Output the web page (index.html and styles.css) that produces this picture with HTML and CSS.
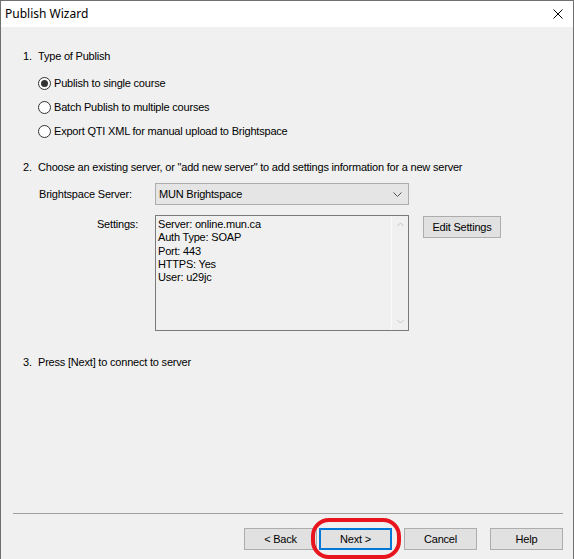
FILE: index.html
```html
<!DOCTYPE html>
<html lang="en">
<head>
<meta charset="utf-8">
<title>Publish Wizard</title>
<link rel="stylesheet" href="styles.css">
</head>
<body>
<div class="window">
  <header class="titlebar">
    <span class="title">Publish Wizard</span>
    <span class="close" aria-label="Close">
      <svg width="10" height="10" viewBox="0 0 10 10"><path d="M0.5 0.5 L9.5 9.5 M9.5 0.5 L0.5 9.5" stroke="#000" stroke-width="1" fill="none"/></svg>
    </span>
  </header>

  <main class="content">
    <section class="step step-one">
      <div class="step-head"><span class="num">1.</span><span>Type of Publish</span></div>
      <ul class="radios">
        <li class="radio-row"><span class="radio checked"></span><span>Publish to single course</span></li>
        <li class="radio-row"><span class="radio"></span><span>Batch Publish to multiple courses</span></li>
        <li class="radio-row"><span class="radio"></span><span>Export QTI XML for manual upload to Brightspace</span></li>
      </ul>
    </section>

    <section class="step step-two">
      <div class="step-head"><span class="num">2.</span><span>Choose an existing server, or "add new server" to add settings information for a new server</span></div>
      <div class="form-grid">
        <label class="lbl lbl-left">Brightspace Server:</label>
        <div class="select">
          <span>MUN Brightspace</span>
          <svg class="chev" width="9" height="6" viewBox="0 0 9 6"><path d="M0.5 0.5 L4.5 4.5 L8.5 0.5" stroke="#555" stroke-width="1" fill="none"/></svg>
        </div>
        <span></span>

        <label class="lbl lbl-right">Settings:</label>
        <div class="textbox">
          <div class="textbox-text">Server: online.mun.ca<br>Auth Type: SOAP<br>Port: 443<br>HTTPS: Yes<br>User: u29jc</div>
          <div class="scrollbar">
            <svg width="7" height="5" viewBox="0 0 7 5"><path d="M0.5 4 L3.5 1 L6.5 4" stroke="#c4c4c4" stroke-width="1" fill="none"/></svg>
            <svg width="7" height="5" viewBox="0 0 7 5"><path d="M0.5 1 L3.5 4 L6.5 1" stroke="#c4c4c4" stroke-width="1" fill="none"/></svg>
          </div>
        </div>
        <div class="side"><button class="btn btn-edit">Edit Settings</button></div>
      </div>
    </section>

    <section class="step step-three">
      <div class="step-head"><span class="num">3.</span><span>Press [Next] to connect to server</span></div>
    </section>

    <footer class="footer">
      <hr class="separator">
      <div class="buttons">
        <div class="pair">
          <button class="btn">&lt; Back</button>
          <span class="focus-wrap">
            <button class="btn btn-focus">Next &gt;</button>
            <span class="ring"></span>
          </span>
        </div>
        <button class="btn btn-cancel">Cancel</button>
        <button class="btn">Help</button>
      </div>
    </footer>
  </main>
</div>
</body>
</html>
```

FILE: styles.css
```css
html, body {
  margin: 0;
  padding: 0;
  background: #f0f0f0;
}

body {
  font-family: "Liberation Sans", Arial, sans-serif;
  font-size: 11px;
  letter-spacing: -0.2px;
  color: #000;
}

.window {
  position: relative;
  width: 574px;
  height: 559px;
  box-sizing: border-box;
  border: 1px solid #707070;
  border-bottom: none;
  display: flex;
  flex-direction: column;
  background: #f0f0f0;
  overflow: hidden;
}

/* title bar */
.titlebar {
  height: 26px;
  flex: none;
  background: #fff;
  display: flex;
  align-items: center;
  justify-content: space-between;
  padding: 0 10px 0 4px;
}

.title {
  font-family: "Noto Sans", "Open Sans", sans-serif;
  font-size: 12px;
  letter-spacing: 0;
  line-height: 16px;
  margin-top: -1px;
}

.close {
  display: flex;
  margin-top: -1px;
}

/* body */
.content {
  flex: 1;
  display: flex;
  flex-direction: column;
  padding: 22px 10px 9px 22px;
}

.step-head {
  display: flex;
  line-height: 14px;
  white-space: nowrap;
}

.num {
  width: 15px;
  flex: none;
}

.radios {
  list-style: none;
  margin: 8px 0 0 15px;
  padding: 0;
}

.radio-row {
  height: 24px;
  display: flex;
  align-items: center;
}

.radio {
  width: 13px;
  height: 13px;
  box-sizing: border-box;
  border: 1px solid #333;
  border-radius: 50%;
  background: #fff;
  margin-right: 3px;
  display: flex;
  align-items: center;
  justify-content: center;
}

.radio.checked::after {
  content: "";
  width: 7px;
  height: 7px;
  border-radius: 50%;
  background: #333;
}

.step-two {
  margin-top: 17px;
}

.form-grid {
  display: grid;
  grid-template-columns: 116px 254px auto;
  row-gap: 10px;
  margin: 9px 0 0 16px;
  align-items: start;
}

.lbl {
  line-height: 14px;
}

.lbl-left {
  align-self: center;
}

.lbl-right {
  text-align: right;
  padding-right: 17px;
  padding-top: 2px;
}

.select {
  height: 22px;
  box-sizing: border-box;
  background: #e5e5e5;
  border: 1px solid #adadad;
  display: flex;
  align-items: center;
  justify-content: space-between;
  padding: 0 6px 0 3px;
}

.chev {
  margin-top: 1px;
}

.textbox {
  height: 116px;
  box-sizing: border-box;
  border: 1px solid #7a7a7a;
  background: #f0f0f0;
  display: flex;
}

.textbox-text {
  flex: 1;
  padding: 2px 2px;
  line-height: 13.25px;
}

.scrollbar {
  width: 16px;
  flex: none;
  border-left: 1px solid #fafafa;
  display: flex;
  flex-direction: column;
  justify-content: space-between;
  align-items: center;
  padding: 6px 0 6px;
}

.side {
  padding-left: 14px;
  padding-top: 1px;
}

.btn {
  font-family: "Liberation Sans", Arial, sans-serif;
  font-size: 11px;
  letter-spacing: -0.2px;
  color: #000;
  background: #e1e1e1;
  border: 1px solid #adadad;
  width: 73px;
  height: 22px;
  padding: 0;
  margin: 0;
}

.btn-edit {
  width: 78px;
}

.step-three {
  margin-top: 24px;
}

/* footer */
.footer {
  margin-top: auto;
  margin-left: -10px;
}

.separator {
  border: none;
  border-top: 1px solid #a0a0a0;
  margin: 0 0 14px 0;
}

.buttons {
  display: flex;
  justify-content: flex-end;
  gap: 12px;
}

.btn-cancel {
  margin-right: 1px;
}

.pair {
  display: flex;
  gap: 2px;
}

.focus-wrap {
  position: relative;
  display: flex;
}

.btn-focus {
  border: 2px solid #0078d7;
}

/* red highlight drawn over the Next button */
.ring {
  position: absolute;
  left: -8px;
  right: -9px;
  top: -10px;
  bottom: -9px;
  border: 4px solid #e8141e;
  border-radius: 18px;
  pointer-events: none;
}
```
